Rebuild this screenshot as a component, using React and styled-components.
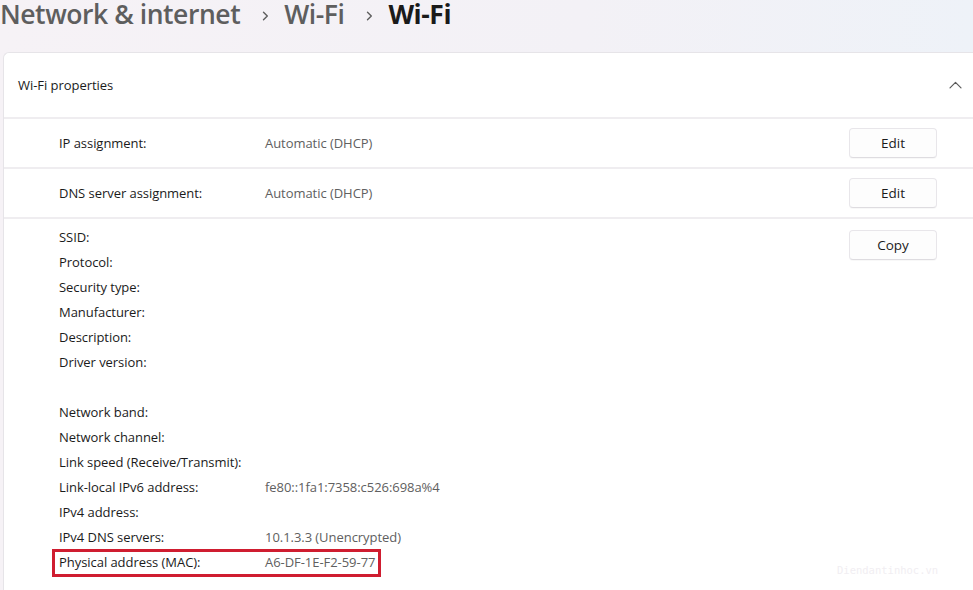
import styled, { createGlobalStyle } from "styled-components";

const GlobalStyle = createGlobalStyle`
  html, body {
    margin: 0;
    padding: 0;
    background: #f4f1f5;
    overflow: hidden;
  }
  body {
    font-family: "Open Sans", "Noto Sans", sans-serif;
    color: #1b1b1b;
  }
`;

const Page = styled.div`
  position: relative;
  width: 973px;
  height: 590px;
  overflow: hidden;
  background: linear-gradient(90deg, #f6f2f6 0%, #f3f1f6 60%, #eef2f8 100%);
`;

const Breadcrumb = styled.div`
  height: 58px;
  display: flex;
  align-items: flex-start;
  margin-top: -6px;
`;

const Crumb = styled.span`
  font-size: 26.5px;
  line-height: 40px;
  font-weight: ${(p) => (p.$current ? 700 : 600)};
  letter-spacing: -0.45px;
  color: ${(p) => (p.$current ? "#1a1a1a" : "#5e5e5e")};
`;

const Sep = styled.span`
  display: flex;
  align-items: center;
  height: 40px;
  padding: 2px 15px 0 22px;
  color: #5e5e5e;
`;

const Card = styled.section`
  margin-left: 3px;
  width: 990px;
  height: 560px;
  background: #ffffff;
  border: 1px solid #e6e4e8;
  border-right: none;
  border-bottom: none;
  border-radius: 6px 0 0 0;
  box-sizing: border-box;
`;

const CardHeader = styled.div`
  height: 64px;
  display: flex;
  align-items: center;
  justify-content: space-between;
  padding: 0 31px 0 14px;
  border-bottom: 2px solid #efedf0;
`;

const SettingRow = styled.div`
  height: 48px;
  display: grid;
  grid-template-columns: 206px 1fr auto;
  align-items: center;
  padding: 0 56px 0 55px;
  border-bottom: 2px solid #efedf0;
`;

const Label = styled.span`
  font-size: 13px;
  line-height: 25px;
  letter-spacing: -0.05px;
  color: #1b1b1b;
  white-space: nowrap;
`;

const Value = styled.span`
  font-size: 13px;
  line-height: 25px;
  letter-spacing: -0.05px;
  color: #606060;
  white-space: nowrap;
`;

const Button = styled.button`
  width: 88px;
  height: 30px;
  border: 1px solid #e8e6ea;
  border-bottom-color: #dedce0;
  border-radius: 4px;
  background: #fdfdfd;
  font-family: inherit;
  font-size: 13.5px;
  color: #1b1b1b;
  padding: 0;
  box-shadow: 0 1px 1px rgba(0, 0, 0, 0.03);
`;

const Details = styled.div`
  display: grid;
  grid-template-columns: 1fr auto;
  padding: 6px 56px 0 55px;
`;

const DetailList = styled.div`
  display: flex;
  flex-direction: column;
`;

const DetailRow = styled.div`
  position: relative;
  display: grid;
  grid-template-columns: 206px auto;
  width: fit-content;
  height: 25px;
  align-items: center;

  ${(p) =>
    p.$marked &&
    `
    &::after {
      content: "";
      position: absolute;
      left: -7px;
      right: -6px;
      top: -1px;
      bottom: -2px;
      border: 3px solid #cf1d30;
    }
  `}
`;

const Spacer = styled.div`
  height: 25px;
`;

const CopyButton = styled(Button)`
  margin-top: 5px;
`;

const Watermark = styled.span`
  position: absolute;
  left: 837px;
  top: 564px;
  font-family: "DejaVu Sans Mono", monospace;
  font-size: 10.5px;
  color: #f1eef2;
`;

function ChevronRight() {
  return (
    <svg width="7" height="10" viewBox="0 0 7 10" fill="none">
      <path d="M1.5 1.2 L5.3 5 L1.5 8.8" stroke="currentColor" strokeWidth="1.4" strokeLinecap="round" strokeLinejoin="round" />
    </svg>
  );
}

function ChevronUp() {
  return (
    <svg width="13" height="8" viewBox="0 0 13 8" fill="none">
      <path d="M1 6.8 L6.5 1.3 L12 6.8" stroke="#5a5a5a" strokeWidth="1.2" strokeLinecap="round" strokeLinejoin="round" />
    </svg>
  );
}

const details = [
  ["SSID:"],
  ["Protocol:"],
  ["Security type:"],
  ["Manufacturer:"],
  ["Description:"],
  ["Driver version:"],
  null,
  ["Network band:"],
  ["Network channel:"],
  ["Link speed (Receive/Transmit):"],
  ["Link-local IPv6 address:", "fe80::1fa1:7358:c526:698a%4"],
  ["IPv4 address:"],
  ["IPv4 DNS servers:", "10.1.3.3 (Unencrypted)"],
  ["Physical address (MAC):", "A6-DF-1E-F2-59-77", true],
];

export default function App() {
  return (
    <Page>
      <GlobalStyle />
      <Breadcrumb>
        <Crumb>Network &amp; internet</Crumb>
        <Sep><ChevronRight /></Sep>
        <Crumb>Wi-Fi</Crumb>
        <Sep><ChevronRight /></Sep>
        <Crumb $current>Wi-Fi</Crumb>
      </Breadcrumb>

      <Card>
        <CardHeader>
          <Label>Wi-Fi properties</Label>
          <ChevronUp />
        </CardHeader>

        <SettingRow>
          <Label>IP assignment:</Label>
          <Value>Automatic (DHCP)</Value>
          <Button>Edit</Button>
        </SettingRow>

        <SettingRow>
          <Label>DNS server assignment:</Label>
          <Value>Automatic (DHCP)</Value>
          <Button>Edit</Button>
        </SettingRow>

        <Details>
          <DetailList>
            {details.map((row, i) =>
              row ? (
                <DetailRow key={i} $marked={row[2]}>
                  <Label>{row[0]}</Label>
                  <Value>{row[1] || ""}</Value>
                </DetailRow>
              ) : (
                <Spacer key={i} />
              )
            )}
          </DetailList>
          <CopyButton>Copy</CopyButton>
        </Details>
      </Card>

      <Watermark>Diendantinhoc.vn</Watermark>
    </Page>
  );
}
